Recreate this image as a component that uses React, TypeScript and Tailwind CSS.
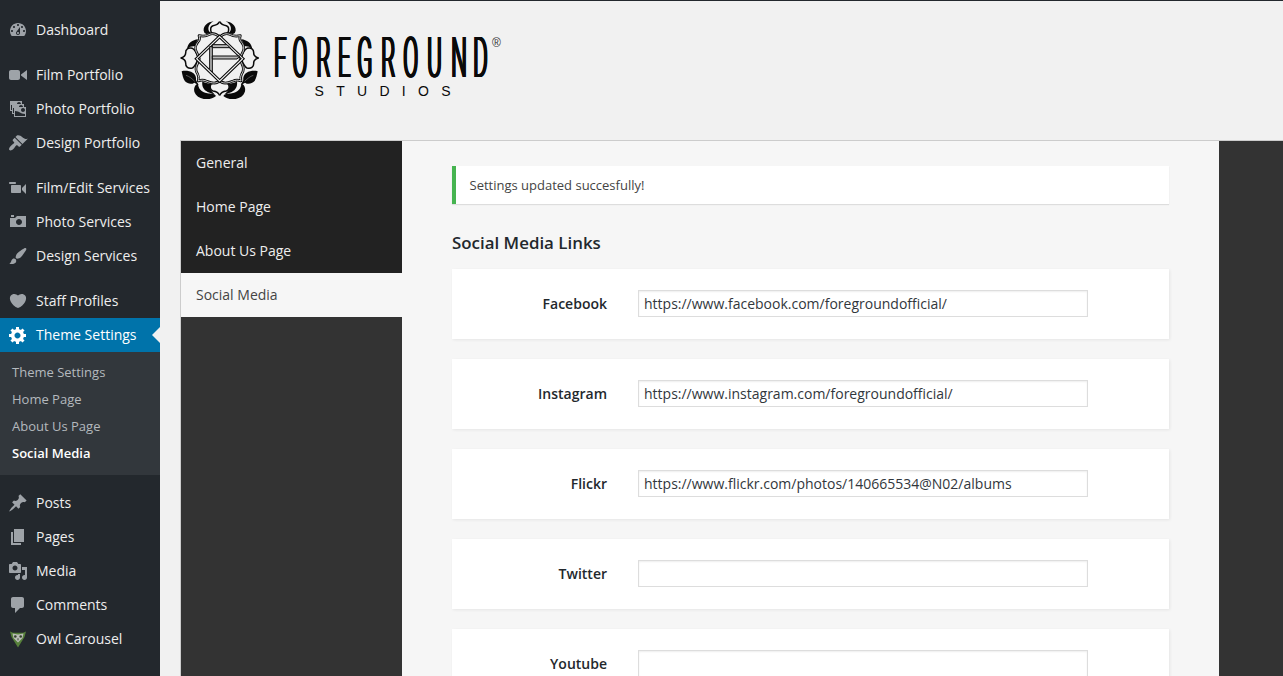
import React from 'react';

const icons = {
  dashboard:
    'M3.76 16h12.48c1.1-1.37 1.76-3.11 1.76-5 0-4.42-3.58-8-8-8s-8 3.58-8 8c0 1.89.66 3.63 1.76 5zM10 4c.55 0 1 .45 1 1s-.45 1-1 1-1-.45-1-1 .45-1 1-1zM6 6c.55 0 1 .45 1 1s-.45 1-1 1-1-.45-1-1 .45-1 1-1zm8 0c.55 0 1 .45 1 1s-.45 1-1 1-1-.45-1-1 .45-1 1-1zm-5.37 5.55L12 7v6c0 1.1-.9 2-2 2s-2-.9-2-2c0-.57.24-1.08.63-1.45zM4 10c.55 0 1 .45 1 1s-.45 1-1 1-1-.45-1-1 .45-1 1-1zm12 0c.55 0 1 .45 1 1s-.45 1-1 1-1-.45-1-1 .45-1 1-1zm-5 3c0-.55-.45-1-1-1s-1 .45-1 1 .45 1 1 1 1-.45 1-1z',
  film: 'M12 13V7c0-1.1-.9-2-2-2H3c-1.1 0-2 .9-2 2v6c0 1.1.9 2 2 2h7c1.1 0 2-.9 2-2zm1-2.5l6 4.5V5l-6 4.5v1z',
  images:
    'M4 15v-3H2V2h12v3h2v3h2v10H6v-3H4zm7-12c-1.1 0-2 .9-2 2h4c0-1.1-.89-2-2-2zm-7 8V6H3v5h1zm7-3h4c0-1.1-.89-2-2-2-1.1 0-2 .9-2 2zm-5 6V9H5v5h1zm9-1c1.1 0 2-.89 2-2 0-1.1-.9-2-2-2s-2 .9-2 2c0 1.11.9 2 2 2zm2 4v-2c-5 0-5-3-10-3v5h10z',
  appearance:
    'M14.48 11.06L7.41 3.99l1.5-1.5c.5-.56 2.3-.47 3.51.32 1.21.8 1.43 1.28 2.91 2.1 1.18.64 2.45 1.26 4.45.85zm-.71.71L6.7 4.7 4.93 6.47c-.39.39-.39 1.02 0 1.41l1.06 1.06c.39.39.39 1.03 0 1.42-.6.6-1.43 1.11-2.21 1.69-.35.26-.7.53-1.01.84C1.43 14.23.4 16.08 1.4 17.07c.99 1 2.84-.03 4.18-1.36.31-.31.58-.66.85-1.02.57-.78 1.08-1.61 1.69-2.21.39-.39 1.02-.39 1.41 0l1.06 1.06c.39.39 1.02.39 1.41 0z',
  video:
    'M8 5c0-.55-.45-1-1-1H2c-.55 0-1 .45-1 1 0 .57.49 1 1 1h5c.55 0 1-.45 1-1zm6 5l4-4v10l-4-4v-2zm-1 4V8c0-.55-.45-1-1-1H4c-.55 0-1 .45-1 1v6c0 .55.45 1 1 1h8c.55 0 1-.45 1-1z',
  camera:
    'M6 5V3H3v2h3zm12 10V4H9L7 6H2v9h16zm-7-8c1.66 0 3 1.34 3 3s-1.34 3-3 3-3-1.34-3-3 1.34-3 3-3z',
  brush:
    'M18.33 3.57s.27-.8-.31-1.36c-.53-.52-1.22-.24-1.22-.24-.61.3-5.76 3.47-7.67 5.57-.86.96-2.06 3.79-1.09 4.82.92.98 3.96-.17 4.79-1 2.06-2.06 5.21-7.17 5.5-7.79zM1.4 17.65c2.37-1.56 1.46-3.41 3.23-4.64.93-.65 2.22-.62 3.08.29.63.67.8 2.57-.16 3.46-1.57 1.45-4 1.55-6.15.89z',
  heart:
    'M10 17.12c3.33-1.4 5.74-3.79 7.04-6.21 1.28-2.41 1.46-4.81.32-6.25-1.03-1.29-2.37-1.78-3.73-1.74s-2.68.63-3.63 1.46c-.95-.83-2.27-1.42-3.63-1.46s-2.7.45-3.73 1.74c-1.14 1.44-.96 3.84.34 6.25 1.28 2.42 3.69 4.81 7.02 6.21z',
  gear: 'M18 12h-2.18c-.17.7-.44 1.35-.81 1.93l1.54 1.54-2.1 2.1-1.54-1.54c-.58.36-1.23.63-1.91.79V19H8v-2.18c-.68-.16-1.33-.43-1.91-.79l-1.54 1.54-2.12-2.12 1.54-1.54c-.36-.58-.63-1.23-.79-1.91H1V9.03h2.17c.16-.7.44-1.35.8-1.94L2.43 5.55l2.1-2.1 1.54 1.54c.58-.37 1.24-.64 1.93-.81V2h3v2.18c.68.16 1.33.43 1.91.79l1.54-1.54 2.12 2.12-1.54 1.54c.36.59.64 1.24.8 1.94H18V12zm-8.5 1.5c1.66 0 3-1.34 3-3s-1.34-3-3-3-3 1.34-3 3 1.34 3 3 3z',
  pin: 'M10.44 3.02l1.82-1.82 6.36 6.35-1.83 1.82c-1.05-.68-2.48-.57-3.41.36l-.75.75c-.92.93-1.04 2.35-.35 3.41l-1.83 1.82-2.41-2.41-2.8 2.79c-.42.42-3.38 2.71-3.8 2.29s1.86-3.39 2.28-3.81l2.79-2.79L4.1 9.36l1.83-1.82c1.05.69 2.48.57 3.4-.36l.75-.75c.93-.92 1.05-2.35.36-3.41z',
  page: 'M6 15V2h10v13H6zm-1 1h8v2H3V5h2v11z',
  media:
    'M13 11V4c0-.55-.45-1-1-1h-1.67L9 1H5L3.67 3H2c-.55 0-1 .45-1 1v7c0 .55.45 1 1 1h10c.55 0 1-.45 1-1zM7 4.5c1.38 0 2.5 1.12 2.5 2.5S8.38 9.5 7 9.5 4.5 8.38 4.5 7 5.62 4.5 7 4.5zM14 6h5v10.5c0 1.38-1.12 2.5-2.5 2.5S14 17.88 14 16.5s1.12-2.5 2.5-2.5c.17 0 .34.02.5.05V9h-3V6zm-4 8.05V13h2v3.5c0 1.38-1.12 2.5-2.5 2.5S7 17.88 7 16.5 8.12 14 9.5 14c.17 0 .34.02.5.05z',
  comment: 'M5 2h9c1.1 0 2 .9 2 2v7c0 1.1-.9 2-2 2h-2l-5 5v-5H5c-1.1 0-2-.9-2-2V4c0-1.1.9-2 2-2z',
};

type IconName = keyof typeof icons;

function Icon({ name }: { name: IconName }) {
  return (
    <svg viewBox="0 0 20 20" className="size-5 shrink-0" fill="currentColor" fillRule="evenodd">
      <path d={icons[name]} />
    </svg>
  );
}

function OwlIcon() {
  return (
    <svg viewBox="0 0 20 20" className="size-5 shrink-0">
      <path d="M2 2.500 5 3.800h10l3-1.300-1.500 5.500L10 18.500 3.500 8z" fill="#56803a" />
      <path d="M4.500 4.500 10 5.500l5.500-1L14.500 9 10 13.500 5.500 9z" fill="#b9bcb6" />
      <circle cx="7.300" cy="7.500" r="1.300" fill="#33402c" />
      <circle cx="12.700" cy="7.500" r="1.300" fill="#33402c" />
      <path d="M9.200 9.500h1.600L10 12z" fill="#33402c" />
    </svg>
  );
}

function MenuItem({ icon, label }: { icon: IconName | 'owl'; label: string }) {
  return (
    <li className="flex h-[34px] items-center gap-2 pl-2 text-[#9ea3a8]">
      {icon === 'owl' ? <OwlIcon /> : <Icon name={icon} />}
      <span className="text-sm whitespace-nowrap text-[#eee]">{label}</span>
    </li>
  );
}

const submenu = ['Theme Settings', 'Home Page', 'About Us Page', 'Social Media'];

function Sidebar() {
  return (
    <nav className="w-40 shrink-0 bg-[#23282d] pt-[13px]">
      <ul>
        <MenuItem icon="dashboard" label="Dashboard" />
      </ul>
      <ul className="mt-[11px]">
        <MenuItem icon="film" label="Film Portfolio" />
        <MenuItem icon="images" label="Photo Portfolio" />
        <MenuItem icon="appearance" label="Design Portfolio" />
      </ul>
      <ul className="mt-[11px]">
        <MenuItem icon="video" label="Film/Edit Services" />
        <MenuItem icon="camera" label="Photo Services" />
        <MenuItem icon="brush" label="Design Services" />
      </ul>
      <ul className="mt-[11px]">
        <MenuItem icon="heart" label="Staff Profiles" />
        <li>
          <div className="flex h-[34px] items-center gap-2 bg-[#0073aa] pl-2 text-white">
            <Icon name="gear" />
            <span className="text-sm whitespace-nowrap">Theme Settings</span>
            <span className="ml-auto h-0 w-0 border-y-8 border-r-8 border-y-transparent border-r-[#f1f1f1]" />
          </div>
          <ul className="bg-[#32373c] pt-[7px] pb-2 text-[13px] text-[#b4b9be]">
            {submenu.map((s) => (
              <li
                key={s}
                className={
                  s === 'Social Media'
                    ? 'h-[27px] pl-3 leading-[27px] font-semibold text-white'
                    : 'h-[27px] pl-3 leading-[27px]'
                }
              >
                {s}
              </li>
            ))}
          </ul>
        </li>
      </ul>
      <ul className="mt-[11px]">
        <MenuItem icon="pin" label="Posts" />
        <MenuItem icon="page" label="Pages" />
        <MenuItem icon="media" label="Media" />
        <MenuItem icon="comment" label="Comments" />
        <MenuItem icon="owl" label="Owl Carousel" />
      </ul>
    </nav>
  );
}

function EmblemHalf() {
  const ring =
    'M131 64c-8-9-20-14-32-8-9 5-19 5-30 3 3 8 2 14-4 20-8 10-8 24-1 34l6 15-6 16c-6 11-5 22 1 30 4 8 4 14 2 21 9-4 18-3 26 1 14 6 30 8 38-2';
  return (
    <g>
      {/* solid shadows behind the petals */}
      <path d="M113 16C94 18 82 30 83 44q1 8 8 10l14-2C93 44 94 26 113 16z" fill="#0a0a0a" />
      <path d="M66 70C50 72 35 80 33 100l10-8 14-2q3-10 9-20z" fill="#0a0a0a" />
      {/* top, side and bottom petals */}
      <g fill="#f1f1f1" stroke="#0a0a0a" strokeWidth="4.500" strokeLinejoin="round">
        <path d="M131 17c-5 9-13 11-20 12-7 2-9 10-5 21l25 12" />
        <path d="M15 126c9-3 14-9 14-15-1-12 8-17 20-14 8 3 12 12 18 29-6 17-10 27-18 30-12 3-21-3-20-15 0-6-5-12-14-15z" />
        <path d="M131 238c-4-9-12-12-20-13-8-3-10-10-7-20l27-12" />
      </g>
      {/* scalloped ring */}
      <path d={ring} fill="none" stroke="#0a0a0a" strokeWidth="8" strokeLinejoin="round" />
      <path d={ring} fill="none" stroke="#f1f1f1" strokeWidth="2.500" strokeLinejoin="round" />
      {/* leaf and lower scrolls */}
      <path d="M17 166c10-3 24-1 33 4 10 6 11 16 10 22l8 16-13-8c-8 6-20 4-28-4-6-8-8-20-10-30z" fill="#0a0a0a" />
      <path d="M30 178c10 3 18 10 26 18" fill="none" stroke="#a0a0a0" strokeWidth="1.500" />
      <path d="M66 202c-12 6-16 22-6 34 12 16 46 18 60 4-6-8-16-6-26-8-18-4-28-14-28-30z" fill="#0a0a0a" />
      <path d="M79 196c-2 16 4 26 16 32l22 8c-12-10-18-20-13-34-9 1-18-1-25-6z" fill="#0a0a0a" />
    </g>
  );
}

function Emblem() {
  return (
    <svg viewBox="0 0 270 270" className="size-[90px] shrink-0">
      <EmblemHalf />
      <g transform="matrix(-1 0 0 1 262 0)">
        <EmblemHalf />
      </g>
      <path d="M131 62 200 128 131 195 62 128z" fill="none" stroke="#0a0a0a" strokeWidth="10" />
      <path d="M131 62 200 128 131 195 62 128z" fill="none" stroke="#f1f1f1" strokeWidth="3.500" />
      <g fill="#b9b9b9" stroke="#0a0a0a" strokeWidth="3">
        <path d="M101 92h8v76l-8-8z" />
        <path d="M109 86h44l9 9h-53z" />
        <path d="M109 120h82l-8 9h-74z" />
      </g>
    </svg>
  );
}

const letters = [
  ['F', 'w-[46px]'],
  ['O', 'w-[60px]'],
  ['R', 'w-[54px]'],
  ['E', 'w-[48px]'],
  ['G', 'w-[60px]'],
  ['R', 'w-[55px]'],
  ['O', 'w-[60px]'],
  ['U', 'w-[60px]'],
  ['N', 'w-[55px]'],
  ['D', 'w-[42px]'],
];

function Logo() {
  return (
    <div className="flex text-[#0a0a0a]">
      <Emblem />
      <div className="flex w-[226px] flex-col pt-[15px] pl-[6.5px]">
        <div className="flex h-[52px] w-[540px] origin-top-left scale-x-[.4] font-['Roboto'] text-[55px] leading-[55px] font-light [text-shadow:1px_0,2px_0,3px_0,4px_0,5px_0]">
          {letters.map(([letter, width], i) => (
            <span key={i} className={width}>
              {letter}
            </span>
          ))}
        </div>
        <div className="pl-[42px] font-['Liberation_Sans'] text-[14px] leading-4 tracking-[12.3px]">STUDIOS</div>
      </div>
      <div className="pt-[20px] font-['Liberation_Sans'] text-[12px] leading-[14px] text-[#333]">®</div>
    </div>
  );
}

const tabs = ['General', 'Home Page', 'About Us Page', 'Social Media'];

const links = [
  { label: 'Facebook', url: 'https://www.facebook.com/foregroundofficial/' },
  { label: 'Instagram', url: 'https://www.instagram.com/foregroundofficial/' },
  { label: 'Flickr', url: 'https://www.flickr.com/photos/140665534@N02/albums' },
  { label: 'Twitter', url: '' },
  { label: 'Youtube', url: '' },
];

export default function App() {
  return (
    <div className="flex h-[676px] w-[1283px] overflow-hidden bg-[#f1f1f1] font-['Open_Sans',sans-serif] text-[#444]">
      <Sidebar />
      <div className="flex min-w-0 grow flex-col border-t border-[#23282d]">
        <header className="h-[139px] shrink-0 pt-[15px] pl-4">
          <Logo />
        </header>
        <div className="ml-5 flex grow border-t border-l border-[#ccc] bg-[#333]">
          <ul className="w-[221px] shrink-0 text-sm">
            {tabs.map((t) => (
              <li
                key={t}
                className={
                  t === 'Social Media'
                    ? 'h-11 bg-[#f6f6f6] pl-[15px] leading-11 text-[#444]'
                    : 'h-11 bg-[#222] pl-[15px] leading-11 text-[#eee]'
                }
              >
                {t}
              </li>
            ))}
          </ul>
          <main className="w-[817px] shrink-0 bg-[#f6f6f6] pt-[25px] pr-[50px] pl-[50px]">
            <p className="h-[38px] border-l-4 border-[#46b450] bg-white pl-[13.5px] text-[13px] leading-[38px] shadow-[0_1px_1px_0_rgba(0,0,0,0.1)]">
              Settings updated succesfully!
            </p>
            <h2 className="mt-[26px] h-[26px] text-[16.9px] leading-[25px] font-semibold text-[#23282d]">
              Social Media Links
            </h2>
            <div className="mt-[13px] flex flex-col gap-5">
              {links.map((l) => (
                <label
                  key={l.label}
                  className="flex h-[70px] shrink-0 items-start bg-white pt-[21px] shadow-[1px_1px_3px_rgba(0,0,0,0.07)]"
                >
                  <span className="w-[155px] text-right text-sm leading-7 font-semibold text-[#23282d]">{l.label}</span>
                  <input
                    type="text"
                    defaultValue={l.url}
                    className="ml-[31px] h-[27px] w-[450px] border border-[#ddd] bg-white px-[5px] text-sm text-[#32373c] shadow-[inset_0_1px_2px_rgba(0,0,0,0.07)]"
                  />
                </label>
              ))}
            </div>
          </main>
        </div>
      </div>
    </div>
  );
}
